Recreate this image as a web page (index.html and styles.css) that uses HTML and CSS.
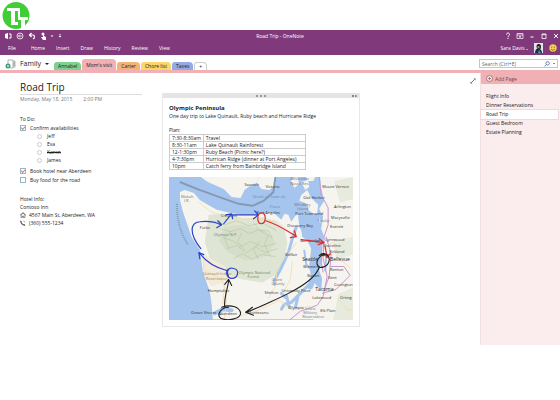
FILE: index.html
```html
<!DOCTYPE html>
<html lang="en">
<head>
    <meta charset="UTF-8">
    <meta name="viewport" content="width=device-width, initial-scale=1.0">
    <title>Road Trip - OneNote</title>
    <link rel="stylesheet" href="styles.css">
</head>
<body>
    <div class="brand">
        <svg class="brand-logo" viewBox="0 0 28 27" role="img" aria-label="Logo">
            <circle cx="14" cy="13.500" r="13.500" fill="#3fce35"/>
            <path d="M5 6h13v9h8v3h-3v8h-4v-8h-3V9h-3v14H9V9H5z" fill="#fff"/>
            <path d="M9 20h7v3H9z" fill="#fff"/>
        </svg>
    </div>

    <header class="ribbon">
        <div class="title-bar">
            <div class="quick-access">
                <button aria-label="OneNote"><svg viewBox="0 0 8 8"><path d="M1 2l3-1v6L1 6z" fill="#fff"/><path d="M5 2h2v4H5" fill="none" stroke="#fff"/></svg></button>
                <button aria-label="Back"><svg viewBox="0 0 8 8" fill="none" stroke="#fff" stroke-width=".8"><circle cx="4" cy="4" r="3"/><path d="M6 4H2.500M4 2.500L2.500 4 4 5.500"/></svg></button>
                <button aria-label="Undo"><svg viewBox="0 0 8 8" fill="none" stroke="#fff" stroke-width="1.200"><path d="M3.500 1L1.500 3l2 2M1.500 3H5c2 0 2 3 0 4"/></svg></button>
                <button aria-label="Touch mode"><svg viewBox="0 0 8 8"><circle cx="3" cy="2" r="1.500" fill="#fff"/><path d="M3 2v3H1l2 3h3V5L4 4V2z" fill="#fff"/></svg></button>
                <button class="narrow" aria-label="Touch options"><svg viewBox="0 0 8 8"><path d="M2.500 3.500h3L4 5z" fill="#fff"/></svg></button>
                <button class="narrow" aria-label="Customize"><svg viewBox="0 0 8 8"><path d="M3 2.500h2v.7H3zM2.500 4h3L4 5.500z" fill="#fff"/></svg></button>
            </div>
            <h1 class="window-title">Road Trip - OneNote</h1>
            <div class="window-buttons">
                <button aria-label="Help"><svg viewBox="0 0 8 8" fill="none" stroke="#fff"><path d="M2.500 2.500c0-2 3-2 3 0C5.500 4 4 3.500 4 5.200M4 6v1"/></svg></button>
                <button aria-label="Ribbon display"><svg viewBox="0 0 8 8" fill="none" stroke="#fff" stroke-width=".7"><path d="M1 1.500h6v5H1zM1 3h6M4 6V4M3 5l1-1 1 1"/></svg></button>
                <button aria-label="Minimize"><svg viewBox="0 0 8 8"><path d="M2.500 4.500h3v1h-3z" fill="#fff"/></svg></button>
                <button aria-label="Maximize"><svg viewBox="0 0 8 8" fill="none" stroke="#fff" stroke-width=".8"><path d="M2 2h4v4.500H2zM2 2.600h4"/></svg></button>
                <button aria-label="Close"><svg viewBox="0 0 8 8" fill="none" stroke="#fff"><path d="M2 2l4 4M6 2L2 6"/></svg></button>
            </div>
        </div>
        <div class="menu-bar">
            <nav class="menu">
                <a href="#">File</a>
                <a href="#">Home</a>
                <a href="#">Insert</a>
                <a href="#">Draw</a>
                <a href="#">History</a>
                <a href="#">Review</a>
                <a href="#">View</a>
            </nav>
            <div class="account">
                <button class="user">Sara Davis <span class="caret"></span></button>
                <svg class="avatar" viewBox="0 0 9 10" role="img" aria-label="Sara Davis">
                    <rect width="9" height="10" fill="#dfe6ea"/>
                    <path d="M2.500 4c-.5-4 5-4 4.500 0L6.500 6h-3z" fill="#1c1a20"/>
                    <path d="M3.500 3h2v2.500h-2z" fill="#b08872"/>
                    <path d="M1 10c0-4 2-5 4-4.500S8 8 8 10z" fill="#1f2d42"/>
                    <path d="M5 7l2 3H4z" fill="#5c8fb8"/>
                </svg>
                <svg class="smiley" viewBox="0 0 8 8" role="img" aria-label="Feedback">
                    <circle cx="4" cy="4" r="3.700" fill="#f7cf52"/>
                    <circle cx="2.700" cy="3" r=".6" fill="#6b4a12"/>
                    <circle cx="5.300" cy="3" r=".6" fill="#6b4a12"/>
                    <path d="M2 5c1 1.600 3 1.600 4 0" fill="none" stroke="#6b4a12" stroke-width=".6"/>
                </svg>
            </div>
        </div>
    </header>

    <div class="section-bar">
        <button class="notebook">
            <svg viewBox="0 0 11 10" fill="none">
                <path d="M3 1h5v8H5M3 1v4M8 2h2v2H8M8 4h2v2H8M8 6h2v2H8" stroke="#8d9894" stroke-width=".7"/>
                <circle cx="3" cy="7" r="2.500" fill="#3e9c77"/>
                <path d="M2 7h2M3 6v2" stroke="#fff" stroke-width=".7"/>
            </svg>
            Family <span class="caret"></span>
        </button>
        <div class="tabs">
            <button class="tab green">Annabel</button>
            <button class="tab pink">Mom's visit</button>
            <button class="tab orange">Carter</button>
            <button class="tab yellow">Chore list</button>
            <button class="tab blue">Taxes</button>
            <button class="tab add" aria-label="New section">+</button>
        </div>
        <div class="search">
            <input type="search" placeholder="Search (Ctrl+E)" aria-label="Search">
            <svg viewBox="0 0 6 6" fill="none" stroke="#49719c" stroke-width=".8"><circle cx="3.600" cy="2.300" r="1.700"/><path d="M2.400 3.500L.5 5.500"/></svg>
            <span class="caret"></span>
        </div>
    </div>

    <div class="workspace">
        <main class="page">
            <section class="notes">
                <h2>Road Trip</h2>
                <p class="date"><span>Monday, May 18, 2015</span><span>2:00 PM</span></p>

                <p>To Do:</p>
                <label class="task"><input type="checkbox" checked>Confirm availabilities</label>
                <ul class="people">
                    <li>Jeff</li>
                    <li>Eva</li>
                    <li><s>Karen</s></li>
                    <li>James</li>
                </ul>
                <label class="task"><input type="checkbox" checked>Book hotel near Aberdeen</label>
                <label class="task"><input type="checkbox">Buy food for the road</label>

                <div class="hotel">
                    <p>Hotel Info:</p>
                    <p>Contoso Inn</p>
                    <p class="with-icon">
                        <svg viewBox="0 0 7 7"><path d="M0 3.500L3.500.3 7 3.500l-.6.6-2.900-2.700L.6 4.100z" fill="#444"/><path d="M1.300 3.700V6.500h1.500V4.700h1.400v1.800h1.500V3.700" fill="none" stroke="#444" stroke-width=".7"/></svg>
                        4567 Main St, Aberdeen, WA
                    </p>
                    <p class="with-icon">
                        <svg viewBox="0 0 7 7"><path d="M1 .6l1.300 1.600-.7.700L4 5.300l.8-.6L6.400 6l-1 .8C3 6.800.3 4 .3 1.300z" fill="#444"/><path d="M4 1.200c1 .1 1.700.8 1.800 1.800" fill="none" stroke="#444" stroke-width=".5"/></svg>
                        (360) 555-1234
                    </p>
                </div>
            </section>

            <section class="container">
                <div class="handle"><span class="grip"></span><span class="resize"></span></div>
                <h3>Olympic Peninsula</h3>
                <p>One day trip to Lake Quinault, Ruby beach and Hurricane Ridge</p>
                <p class="plan">Plan:</p>
                <table>
                    <tr><td>7:30-8:30am</td><td>Travel</td></tr>
                    <tr><td>8:30-11am</td><td>Lake Quinault Rainforest</td></tr>
                    <tr><td>12-1:30pm</td><td>Ruby Beach (Picnic here?)</td></tr>
                    <tr><td>4-7:30pm</td><td>Hurrican Ridge (dinner at Port Angeles)</td></tr>
                    <tr><td>10pm</td><td>Catch ferry from Bainbridge Island</td></tr>
                </table>
                <svg class="map" viewBox="0 0 185 144" role="img" aria-label="Map of the Olympic Peninsula">
                    <rect width="185" height="144" fill="#a5c5ef"/>
                    <!-- land -->
                    <g fill="#f6f4ef">
                        <path d="M11 15l5-2 9 3 6 7 8 5 9 5 13 3 12 2 15 0 7-2 10 0 8 7 3-6 4 1 3 7 4-6 3-1 2 10 2 12 5 4 4 8-2 16 2 14 6 8 10 6v27H44l-1-14-2-14-7-20-3-22-8-12-9-26-3-12z"/>
                        <path d="M32 0l7 5 7 3 9 4 8 8 9 1 4-8 4-3 8-4 3-6z"/>
                        <path d="M91 0h17l-1 8-6 5-8-1-5-6z"/>
                        <path d="M152 0h33v144h-40l2-20 6-8 1-14-3-8 3-10-1-14 3-10-3-8 2-12-4-8 5-8-3-13z"/>
                        <path d="M122 2l7-2 2 7-5 4zM133 5l7-2 1 7-4 3zM138 0h9l-2 4-6 0z"/>
                        <path d="M133 18l6-5 4 8 7 7-1 8 4 10-5-1-3-8-5-4-1-6-8-3z"/>
                    </g>
                    <!-- parks and hills -->
                    <path d="M40 38l15-1 20 5 18-2 14 4 9 8 3 14-3 16-8 16-14 8-20-3-20-6-12-12-6-20z" fill="#dfe5d4"/>
                    <path d="M56 50l18-2 22 5 11 12-8 14-22 5-18-8-9-12z" fill="#d2dcc4" opacity=".7"/>
                    <path d="M33 76l12 8 12 6 2 14-16 6-7-10z" fill="#f3ead9"/>
                    <path d="M166 4l19-4v22l-13 4zM170 118l15-7v33h-20zM165 67l20-5v16l-16 5z" fill="#e6ebdd"/>
                    <g fill="none" stroke="#b3c3a3" stroke-width=".8" opacity=".7">
                        <path d="M46 45l10 3 12-4 12 5 14-3 14 8M52 52l10 3 10-3 9 5 9-4 14 8M54 61l10 3 8 6 10-5 12 5 14-3M58 72l10-3 10 7 9-6 10 6 12-4M65 82l9-5 10 6 9-5 14 2M85 46l6 8 9 0 4 8M73 56l-4 9 7 8M91 65l-6 8 5 10M62 54l-6 8 4 10M100 58l-4 10 6 12"/>
                    </g>
                    <!-- inlets -->
                    <g fill="none" stroke="#a5c5ef" stroke-linecap="round">
                        <path d="M128 50l-4 12-4 14-8 17-6 11 0 4" stroke-width="3"/>
                        <path d="M148 40l0 18-2 22 1 17-5 13" stroke-width="6"/>
                        <path d="M141 108l-10 10-8 8-7 2-3 5M118 119l3 12M130 119l-3 12M113 117l4 4" stroke-width="3"/>
                        <path d="M46 137l8-4 9 1" stroke-width="4"/>
                        <path d="M158 80l-1 14M136 74l2 14 4 4M131 40l1 10 4 6" stroke-width="2"/>
                    </g>
                    <!-- roads -->
                    <g fill="none" stroke="#f0dcae" stroke-width=".8">
                        <path d="M30 25l12 10 20 6 28 1 20 3 10 10M34 78l1 16 18 9 5 15-2 25M70 140l20-6 21-10 13 10 18-4M128 66l-12 16-8 12 0 14-8 14M124 85l-2 18-8 15M185 61l-21 5-8 6M168 80l14 11M170 122l10 12 5 0M56 108l-2 20"/>
                    </g>
                    <g fill="none" stroke="#c995cf">
                        <path d="M151 0l2 18 7 13 0 17-4 12-1 22 4 18-4 20-6 9-17 6-11 9M158 60l5 18-2 22-5 14M154 64l-1 22 2 10M162 90l14 0 6 9-14 14-14 4"/>
                    </g>
                    <!-- sea borders -->
                    <path d="M11 5l17 7 22 8 20 7 14 2 11-5 10-9 2-15" fill="none" stroke="#8699b3" stroke-width="2"/>
                    <path d="M8 27c0 18 4 30 11 41" fill="none" stroke="#819fb4" stroke-width="2" stroke-dasharray="1 1"/>
                    <!-- place names -->
                    <g class="places">
                        <text x="12" y="21">Makah</text><text x="15" y="25">I.R.</text>
                        <text class="town" x="76" y="9">Saanich</text>
                        <text class="town" x="97" y="11">Victoria</text>
                        <text x="122" y="3">Anacortes</text><text x="122" y="8">Naval Res.</text>
                        <text class="sea" x="84" y="21">Strait of Juan de</text>
                        <text class="sea" x="101" y="31">Fuca</text>
                        <text class="town" x="154" y="11">Mount Vernon</text>
                        <text class="town" x="135" y="22">Oak Harbor</text>
                        <text x="126" y="29">Whidbey</text><text x="129" y="33">Island</text>
                        <text class="town" x="127" y="38">Port Townsend</text>
                        <text class="town" x="166" y="31">Arlington</text>
                        <text class="town" x="163" y="42">Marysville</text>
                        <text x="149" y="45">Tulalip</text>
                        <text class="town" x="162" y="51">Everett</text>
                        <text class="town" x="119" y="50">Discovery Bay</text>
                        <text class="town" x="52" y="40">Crescent</text>
                        <text class="town" x="88" y="37">Port Angeles</text>
                        <text class="town" x="31" y="52">Forks</text>
                        <text class="park" x="45" y="59">Olympic N.P.</text>
                        <text class="town" x="132" y="65">Bainbridge</text>
                        <text class="town" x="157" y="64">Lynnwood</text>
                        <text class="town" x="155" y="70">Shoreline</text>
                        <text class="town" x="161" y="76">Kirkland</text>
                        <text class="town" x="117" y="79">Belfair</text>
                        <text class="city" x="134" y="84">Seattle</text>
                        <text class="city" x="162" y="84">Bellevue</text>
                        <text class="town" x="135" y="92">Bremerton</text>
                        <text class="town" x="162" y="95">Renton</text>
                        <text class="park" x="70" y="98">Olympic National</text><text class="park" x="79" y="102">Forest</text>
                        <text class="brown" x="34" y="99">Quinault Indian</text><text class="brown" x="37" y="104">Reservation</text>
                        <text class="town" x="139" y="101">Burien</text><text class="town" x="160" y="103">Kent</text>
                        <text x="103" y="105">Grant</text><text x="103" y="109">County</text>
                        <text class="town" x="166" y="110">Covington</text>
                        <text class="town" x="39" y="116">Humptulips</text>
                        <text class="city" x="147" y="115">Tacoma</text>
                        <text class="town" x="96" y="118">Shelton</text>
                        <text class="town" x="113" y="116">University Place</text>
                        <text class="town" x="144" y="123">Lakewood</text>
                        <text class="town" x="172" y="123">Orting</text>
                        <text class="town" x="120" y="133">Olympia</text>
                        <text x="137" y="134">Lewis</text><text x="135" y="138">Military</text><text x="134" y="142">Reservation</text>
                        <text class="town" x="152" y="136">Elk Plain</text>
                        <text class="town" x="22" y="138">Ocean Shores</text>
                        <text class="town" x="50" y="139">Aberdeen</text>
                        <text class="town" x="79" y="138">Montesano</text>
                    </g>
                    <!-- hand-drawn route -->
                    <g fill="none" stroke-linecap="round" stroke-linejoin="round">
                        <g stroke="#2842c8" stroke-width="1.200">
                            <path d="M58 94C46 91 38 86 31 77M31 82l-1-6 5 2"/>
                            <path d="M32 72C20 57 21 46 31 45c8-1 15 0 21 3M49 44l4 4-5 3"/>
                            <path d="M55 47l7-9M57 38l6-1 1 5M63 38l26 0M86 34l4 4-5 4"/>
                            <path d="M62 92c-6 0-5 9 1 10 7 0 8-9 2-10-5-2-8 3-5 8"/>
                        </g>
                        <g stroke="#dc2b30" stroke-width="1.200">
                            <path d="M93 36c-5 0-5 11 0 11 5-1 5-11 0-11M97 44c11 3 20 9 30 15M126 54l2 6-6 1M133 63l23 3M151 62l5 4-6 2"/>
                            <path d="M157 70l2 11M156 77l3 4 3-4M154 79l8-1"/>
                        </g>
                        <g stroke="#202020" stroke-width="1.100">
                            <path d="M151 79c4-4 11-1 10 5-1 6-10 10-12 4-1-4 2-9 7-10"/>
                            <path d="M151 91c-4 11-19 20-31 26-11 6-20 9-30 14l-12 5M84 131l-7 5 8 3"/>
                            <path d="M56 131c-1-10 3-18 4-27M56 108l4-5 3 6"/>
                            <path d="M53 131c8-3 18-1 19 6 0 6-14 8-20 5-5-4 1-11 8-11"/>
                        </g>
                    </g>
                </svg>
            </section>

            <button class="expand" aria-label="Full page view"><svg viewBox="0 0 6 6"><path d="M3.500.5h2v2zM.5 3.500v2h2z" fill="#555"/><path d="M1.500 4.500l3-3" stroke="#555" stroke-width=".8"/></svg></button>
        </main>

        <aside class="page-list">
            <button class="add-page">
                <svg viewBox="0 0 7 7" fill="none" stroke="#77535a" stroke-width=".6"><circle cx="3.500" cy="3.500" r="3" fill="#fbe3e4"/><path d="M2 3.500h3M3.500 2v3"/></svg>
                Add Page
            </button>
            <nav>
                <a href="#">Flight Info</a>
                <a href="#">Dinner Reservations</a>
                <a href="#" class="current">Road Trip</a>
                <a href="#">Guest Bedroom</a>
                <a href="#">Estate Planning</a>
            </nav>
        </aside>
    </div>
</body>
</html>
```
FILE: styles.css
```css
* {
    box-sizing: border-box;
}

body {
    margin: 0;
    background-color: #fff;
    color: #222;
    font-family: "Open Sans", "Noto Sans", sans-serif;
    font-size: 5px;
    line-height: 8px;
}

h1, h2, h3, p, ul {
    margin: 0;
    padding: 0;
    font-weight: normal;
}

button, input {
    margin: 0;
    padding: 0;
    border: none;
    background: none;
    color: inherit;
    font: inherit;
}

button {
    cursor: pointer;
}

a {
    color: inherit;
    text-decoration: none;
}

svg {
    display: block;
    flex: none;
}

.caret {
    display: inline-block;
    border: 2px solid transparent;
    border-top-color: currentColor;
    border-bottom: none;
}

.brand {
    height: 30px;
    padding: 2px;
}

.brand-logo {
    width: 28px;
    height: 27px;
}

/* purple ribbon */
.ribbon {
    background-color: #80397b;
    color: #fff;
    height: 25px;
}

.title-bar {
    display: grid;
    grid-template-columns: 1fr auto 1fr;
    align-items: center;
    height: 12px;
}

.quick-access {
    display: flex;
    gap: 4px;
    padding-left: 4px;
}

.quick-access svg,
.window-buttons svg {
    width: 8px;
    height: 8px;
}

.quick-access .narrow {
    margin-left: -4px;
}

.window-title {
    font-size: 5px;
}

.window-buttons {
    display: flex;
    justify-content: flex-end;
    gap: 4px;
    padding-right: 0;
}

.menu-bar {
    display: flex;
    justify-content: space-between;
    align-items: center;
    height: 12px;
}

.menu {
    display: flex;
    gap: 11px;
    padding-left: 8px;
}

.menu a:first-child {
    margin-right: 4px;
}

.account {
    display: flex;
    align-items: center;
    gap: 6px;
    padding-right: 3px;
}

.user .caret {
    border-width: 1px;
}

.avatar {
    width: 9px;
    height: 10px;
}

.smiley {
    width: 8px;
    height: 8px;
}

/* notebook name, section tabs and search */
.section-bar {
    display: flex;
    align-items: flex-end;
    height: 18px;
    border-bottom: 3px solid #f1b0b3;
}

.notebook {
    display: flex;
    align-items: center;
    gap: 4px;
    width: 54px;
    height: 13px;
    padding-left: 5px;
    font-size: 7px;
}

.notebook svg {
    width: 11px;
    height: 10px;
}

.tabs {
    display: flex;
    align-items: flex-end;
    flex: 1;
    gap: 1px;
}

.tab {
    height: 8px;
    padding: 0 4px;
    border-radius: 3px 4px 0 0;
    line-height: 8px;
}

.green { background-color: #7fd190; }
.pink { background-color: #f1b0b3; height: 11px; line-height: 10px; }
.orange { background-color: #f6b177; }
.yellow { background-color: #fbd76a; }
.blue { background-color: #94a9e6; }
.add { border: 1px solid #ccc; border-bottom: none; line-height: 6px; }

.search {
    display: flex;
    align-items: center;
    gap: 3px;
    width: 79px;
    height: 9px;
    margin: 0 2px 2px 0;
    padding: 0 2px;
    border: 1px solid #c6c6c6;
}

.search input {
    flex: 1;
    min-width: 0;
    height: 7px;
    outline: none;
}

.search input::placeholder {
    color: #666;
}

.search svg {
    width: 6px;
    height: 6px;
}

.search .caret {
    border-width: 1px;
}

.workspace {
    display: grid;
    grid-template-columns: 6fr 1fr;
    min-height: 272px;
}

.page {
    display: grid;
    grid-template-columns: 162fr 198fr 120fr;
    align-items: start;
}

/* left column */
.notes {
    padding: 7px 20px 0;
}

.notes h2 {
    font-size: 10px;
    line-height: 14px;
    border-bottom: 1px solid #ddd;
}

.date {
    display: flex;
    gap: 11px;
    margin-bottom: 12px;
    color: #777;
}

.task {
    display: flex;
    align-items: center;
    gap: 4px;
    height: 9px;
}

.task input {
    appearance: none;
    display: grid;
    place-items: center;
    width: 6px;
    height: 6px;
    border: 1px solid #92b8cb;
}

.task input:checked::after {
    content: "";
    width: 3px;
    height: 2px;
    border-left: 1px solid #d07f6f;
    border-bottom: 1px solid #d07f6f;
    transform: rotate(-45deg);
}

.people {
    padding-left: 17px;
    margin-bottom: 2px;
    list-style: none;
}

.people li {
    display: flex;
    align-items: center;
    gap: 5px;
}

.people li::before {
    content: "";
    width: 3px;
    height: 3px;
    border: 1px solid #ccc;
    border-radius: 50%;
}

.hotel {
    margin-top: 11px;
}

.with-icon {
    display: flex;
    align-items: center;
    gap: 3px;
    white-space: nowrap;
}

.with-icon svg {
    width: 6px;
    height: 6px;
}

/* note container with the plan and the map */
.container {
    margin-top: 20px;
    padding: 0 6px 6px;
    border: 1px solid #e8e8e8;
    border-top: none;
}

.handle {
    display: grid;
    grid-template-columns: 1fr auto 1fr;
    align-items: center;
    height: 5px;
    margin: 0 -6px 6px;
    padding: 0 2px;
    background-color: #e4e4e4;
}

.grip {
    grid-column: 2;
    width: 10px;
    border-top: 2px dotted #999;
}

.resize {
    justify-self: end;
    width: 5px;
    border-top: 2px dotted #888;
}

.container h3 {
    font-size: 6px;
    font-weight: bold;
}

.plan {
    margin-top: 6px;
}

table {
    border-collapse: collapse;
    line-height: 6px;
    white-space: nowrap;
}

td {
    padding: 0 2px;
    border: 1px solid #ccc;
}

td:first-child {
    width: 33px;
}

td:last-child {
    width: 102px;
}

.map {
    width: 100%;
    height: auto;
    margin-top: 7px;
}

.places {
    fill: #777;
    font-size: 4px;
}

.places .town { fill: #333; }
.places .city { fill: #222; font-size: 5px; }
.places .sea { fill: #6d8fbd; font-family: "Liberation Serif", serif; font-size: 5px; font-style: italic; }
.places .park { fill: #66865b; }
.places .brown { fill: #a08468; }

.expand {
    justify-self: end;
    margin: 5px 4px 0 0;
}

.expand svg {
    width: 6px;
    height: 6px;
}

/* page list */
.page-list {
    background-color: #fbedee;
    border-left: 1px solid #f3dfe1;
}

.add-page {
    display: flex;
    align-items: center;
    gap: 2px;
    width: 100%;
    height: 11px;
    padding-left: 5px;
    background-color: #f1b0b3;
    color: #6b4a4d;
}

.add-page svg {
    width: 7px;
    height: 7px;
}

.page-list nav {
    display: flex;
    flex-direction: column;
    margin: 8px 2px 0 0;
}

.page-list nav a {
    padding-left: 5px;
    line-height: 9px;
}

.page-list .current {
    background-color: #fff;
    outline: 1px solid #f0d8da;
}
```
